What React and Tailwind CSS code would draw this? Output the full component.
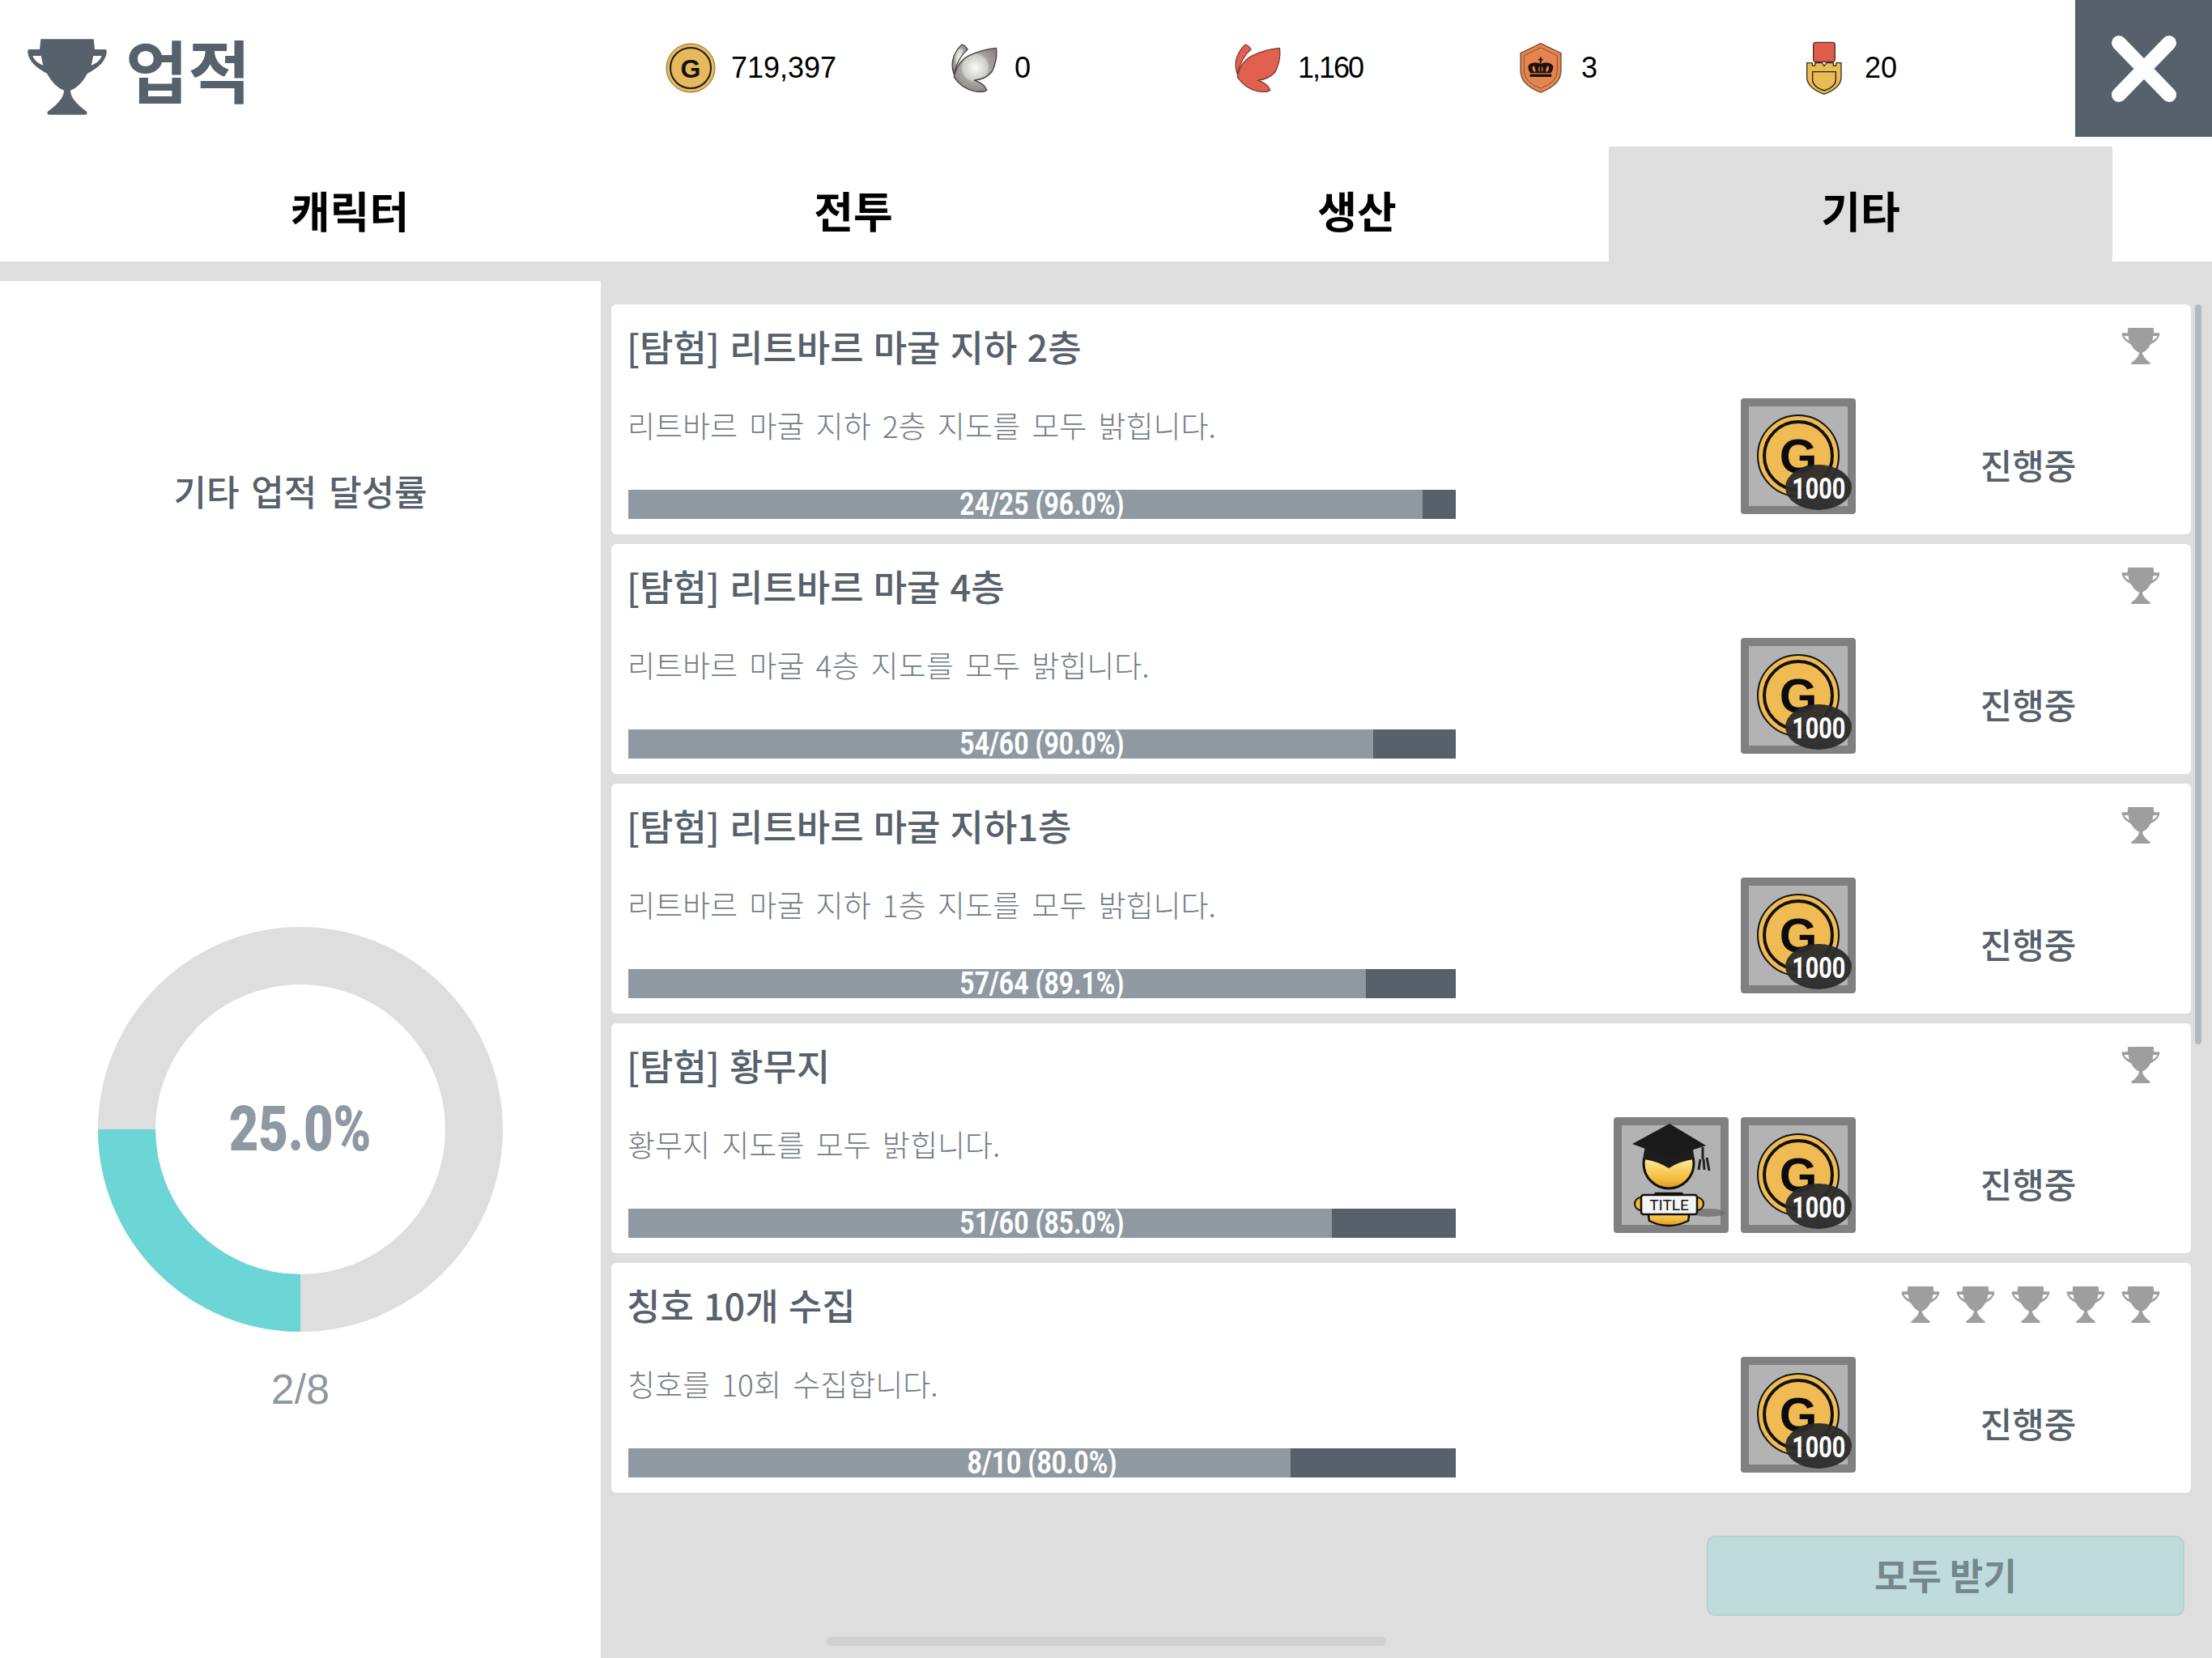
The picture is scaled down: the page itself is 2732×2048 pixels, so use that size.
const C = "#57616b";

function Trophy({ className, fill = "#9e9e9e" }) {
  return (
    <svg viewBox="100 142 300 286" className={className}>
      <path
        fillRule="evenodd"
        fill={fill}
        d="M152 145 H348 L352 183 H390 Q398 183 396 195 Q390 240 325 272 Q300 320 262 335 Q262 370 322 413 Q328 425 315 425 H185 Q172 425 178 413 Q238 370 238 335 Q200 320 175 272 Q110 240 104 195 Q102 183 110 183 H148 Z M122 207 H153 L161 243 Q128 228 122 207 Z M378 207 H347 L339 243 Q372 228 378 207 Z"
      />
    </svg>
  );
}

function Coin({ className }) {
  return (
    <svg viewBox="0 0 62 62" className={className}>
      <circle cx="31" cy="31" r="30" fill="#e5b95c" stroke="#8a6a2a" strokeWidth="1" />
      <circle cx="31" cy="31" r="25" fill="none" stroke="#1a1a1a" strokeWidth="2" />
      <text x="31" y="42.5" textAnchor="middle" fontFamily="Liberation Sans" fontWeight="700" fontSize="32" fill="#111">G</text>
    </svg>
  );
}

function Wing({ className, silver, id }) {
  return (
    <svg viewBox="1122 66 182 190" className={className}>
      <defs>
        <radialGradient id={id} cx="0.5" cy="0.45" r="0.6">
          <stop offset="0" stopColor="#fbfbf7" />
          <stop offset="0.5" stopColor="#c9cbc4" />
          <stop offset="0.56" stopColor="#a8a4a0" />
          <stop offset="1" stopColor="#8a8285" />
        </radialGradient>
      </defs>
      <g fill={silver ? `url(#${id})` : "#e2604f"} stroke={silver ? "#3f3f3f" : "#7a3a30"} strokeWidth="4" strokeLinejoin="round">
        <path d="M1165 72 Q1175 72 1187 90 Q1150 120 1135 185 Q1122 150 1135 115 Q1148 85 1165 72 Z" />
        <path d="M1296 85 Q1302 130 1280 175 Q1255 205 1212 208 Q1250 220 1260 245 Q1250 255 1215 250 Q1165 240 1135 195 Q1145 140 1190 115 Q1240 90 1296 85 Z" />
      </g>
    </svg>
  );
}

function Shield({ className }) {
  return (
    <svg viewBox="112 66 159 190" className={className}>
      <path d="M191 68 L268 105 V170 Q268 225 191 253 Q115 225 115 170 V105 Z" fill="#e5844f" stroke="#6b4a35" strokeWidth="4" />
      <path d="M191 84 L254 114 V170 Q254 215 191 238 Q128 215 128 170 V114 Z" fill="none" stroke="#8a4f2b" strokeWidth="3" />
      <g fill="#1d120c">
        <rect x="188" y="120" width="6" height="24" />
        <rect x="182" y="127" width="18" height="5" />
        <path d="M152 180 Q132 150 160 142 Q178 138 191 146 Q204 138 222 142 Q250 150 230 180 Z" />
        <rect x="150" y="184" width="82" height="11" rx="2" />
      </g>
      <g fill="#e5844f">
        <path d="M165 175 Q154 160 165 152 Q170 160 172 175 Z" />
        <path d="M184 175 Q180 160 187 154 L187 175 Z" />
        <path d="M198 175 Q202 160 195 154 L195 175 Z" />
        <path d="M217 175 Q228 160 217 152 Q212 160 210 175 Z" />
      </g>
    </svg>
  );
}

function Medal({ className }) {
  return (
    <svg viewBox="1172 62 136 198" className={className}>
      <rect x="1200" y="66" width="80" height="72" rx="10" fill="#e25c4e" stroke="#4a2a25" strokeWidth="4" />
      <path d="M1176 142 H1196 V152 H1206 V142 H1232 L1240 154 L1248 142 H1274 V152 H1284 V142 H1303 V195 Q1303 235 1240 258 Q1176 235 1176 195 Z" fill="#e8bd57" stroke="#3a3020" strokeWidth="4" />
      <path d="M1197 175 H1283 V205 Q1283 230 1240 245 Q1197 230 1197 205 Z" fill="none" stroke="#2a2418" strokeWidth="4" />
    </svg>
  );
}

function Stat({ icon, value, className, textClass = "" }) {
  return (
    <div className={`flex items-center gap-[15px] ${className}`}>
      <div className="flex w-[70px] justify-center">{icon}</div>
      <span className={`font-['Liberation_Sans',sans-serif] text-[36px] leading-none text-black ${textClass}`}>{value}</span>
    </div>
  );
}

function Tab({ label, active }) {
  return (
    <div className={`flex w-[622px] items-center justify-center pt-[14px] ${active ? "bg-[#dedede]" : ""}`}>
      <span className="text-[53px] font-bold leading-none text-black">{label}</span>
    </div>
  );
}

function RewardFrame({ children }) {
  return (
    <div className="relative h-[143px] w-[142px] rounded-[4px] border-x-[10px] border-y-[10px] border-[#808080] bg-[#b3b3b3]">
      {children}
    </div>
  );
}

function GoldReward() {
  return (
    <RewardFrame>
      <svg viewBox="0 0 102 102" className="absolute left-[10px] top-[10px] h-[102px] w-[102px]">
        <circle cx="51" cy="51" r="50" fill="#efbb52" stroke="#111" strokeWidth="2" />
        <circle cx="51" cy="51" r="42" fill="none" stroke="#111" strokeWidth="4" />
        <text x="51" y="72" textAnchor="middle" fontFamily="Liberation Sans" fontWeight="700" fontSize="60" fill="#0c0c0c">G</text>
      </svg>
      <div className="absolute left-[45px] top-[72px] flex h-[56px] w-[82px] items-center justify-center rounded-[50%] bg-[#2b2b2b]/95 pt-[4px]">
        <span className="inline-block scale-x-[.8] font-['Roboto',sans-serif] text-[36px] font-bold leading-none text-white">1000</span>
      </div>
    </RewardFrame>
  );
}

function TitleReward() {
  return (
    <RewardFrame>
      <svg viewBox="0 0 122 122" className="absolute left-0 top-0 h-[122px] w-[122px] overflow-visible">
        <defs>
          <linearGradient id="tg" x1="0" x2="0" y1="0" y2="1">
            <stop offset="0.45" stopColor="#fbe58e" />
            <stop offset="0.8" stopColor="#f5bd3c" />
            <stop offset="1" stopColor="#e0942a" />
          </linearGradient>
        </defs>
        <ellipse cx="107" cy="108" rx="21" ry="5" fill="#6b6b6b" opacity="0.75" />
        <path d="M34 118 Q30 100 42 84 H74 Q86 100 82 118 Q58 130 34 118 Z" fill="url(#tg)" stroke="#111" strokeWidth="2.5" />
        <circle cx="58" cy="47" r="31" fill="url(#tg)" stroke="#111" strokeWidth="3" />
        <path d="M27 38 Q28 12 58 12 Q88 12 89 38 L89 42 Q72 44 58 53 Q44 44 27 42 Z" fill="#1c1c1c" />
        <path d="M59 -2 L104 25 L59 40 L13 23 Z" fill="#1a1a1a" />
        <path d="M100 27 L100 42 M97 42 L95 55 M101 42 L102 55 M105 40 L108 56" stroke="#222" strokeWidth="3" fill="none" />
        <circle cx="24" cy="97" r="8" fill="#f0b93a" stroke="#111" strokeWidth="2" />
        <circle cx="93" cy="97" r="8" fill="#f0b93a" stroke="#111" strokeWidth="2" />
        <rect x="24" y="86" width="69" height="24" rx="3" fill="#f5f5f5" stroke="#111" strokeWidth="2.5" />
        <text x="58.5" y="105" textAnchor="middle" fontFamily="Roboto" fontWeight="400" fontSize="19" fill="#111">TITLE</text>
      </svg>
    </RewardFrame>
  );
}

function Card({ item }) {
  return (
    <div className="flex h-[284px] rounded-[6px] bg-white">
      <div className="ml-[21px] flex w-[1022px] flex-col">
        <div className="-ml-[2px] mt-[23px] h-[58px] whitespace-nowrap text-[45px] font-medium leading-[58px] text-[#57616b] [word-spacing:2px]">{item.title}</div>
        <div className="-ml-[1px] mt-[43px] h-[50px] whitespace-nowrap text-[37px] font-light leading-[50px] text-[#747c84] [word-spacing:6px]">{item.desc}</div>
        <div className="relative mt-[55px] h-[36px] bg-[#57616b]">
          <div className="h-full bg-[#8f99a2]" style={{ width: `${item.pct}%` }} />
          <div className="absolute inset-0 flex items-center justify-center">
            <span className="inline-block scale-x-[.84] whitespace-nowrap font-['Roboto',sans-serif] text-[38px] font-bold leading-none text-white">{item.bar}</span>
          </div>
        </div>
      </div>
      <div className="flex min-w-0 flex-1 flex-col">
        <div className="flex h-[116px] items-start justify-end gap-[20px] pr-[38px] pt-[28px]">
          {Array.from({ length: item.trophies }).map((_, i) => (
            <Trophy key={i} className="h-[47px] w-[48px]" />
          ))}
        </div>
        <div className="flex">
          <div className="flex w-[494px] justify-end gap-[15px]">
            {item.title2 && <TitleReward />}
            <GoldReward />
          </div>
          <div className="flex h-[143px] flex-1 items-center justify-center pl-[12px] pt-[19px] text-[43px] font-medium leading-none text-[#57616b]">진행중</div>
        </div>
      </div>
    </div>
  );
}

const items = [
  { title: "[탐험] 리트바르 마굴 지하 2층", desc: "리트바르 마굴 지하 2층 지도를 모두 밝힙니다.", bar: "24/25 (96.0%)", pct: 96, trophies: 1 },
  { title: "[탐험] 리트바르 마굴 4층", desc: "리트바르 마굴 4층 지도를 모두 밝힙니다.", bar: "54/60 (90.0%)", pct: 90, trophies: 1 },
  { title: "[탐험] 리트바르 마굴 지하1층", desc: "리트바르 마굴 지하 1층 지도를 모두 밝힙니다.", bar: "57/64 (89.1%)", pct: 89.1, trophies: 1 },
  { title: "[탐험] 황무지", desc: "황무지 지도를 모두 밝힙니다.", bar: "51/60 (85.0%)", pct: 85, trophies: 1, title2: true },
  { title: "칭호 10개 수집", desc: "칭호를 10회 수집합니다.", bar: "8/10 (80.0%)", pct: 80, trophies: 5 },
];

export default function App() {
  return (
    <div className="relative flex h-[2048px] w-[2732px] flex-col overflow-hidden bg-[#dedede] font-['Noto_Sans_CJK_KR','Noto_Sans',sans-serif]">
      <header className="flex h-[181px] shrink-0 bg-white">
        <div className="h-[169px] w-[818px] shrink-0">
          <div className="flex h-[169px] items-center gap-[22px] pl-[33px]">
            <Trophy className="mt-[20px] h-[96px] w-[100px]" fill={C} />
            <span className="text-[84px] font-bold leading-none text-[#57616b]">업적</span>
          </div>
        </div>
        <div className="flex h-[169px] min-w-0 flex-1 items-center pb-[2px]">
          <Stat className="w-[350px]" icon={<Coin className="h-[62px] w-[62px]" />} value="719,397" />
          <Stat className="w-[350px]" icon={<Wing silver id="ws" className="h-[62px] w-[59px]" />} value="0" />
          <Stat className="w-[350px]" icon={<Wing id="wr" className="h-[62px] w-[59px]" />} value="1,160" textClass="tracking-[-2px]" />
          <Stat className="w-[350px]" icon={<Shield className="h-[62px] w-[52px]" />} value="3" />
          <Stat className="w-[345px]" icon={<Medal className="h-[66px] w-[46px]" />} value="20" />
        </div>
        <div className="flex h-[169px] w-[169px] shrink-0 items-center justify-center bg-[#57616b]">
          <svg viewBox="0 0 82 84" className="h-[84px] w-[82px]">
            <path d="M10 10 L72 74 M72 10 L10 74" stroke="#fff" strokeWidth="18" strokeLinecap="round" />
          </svg>
        </div>
      </header>

      <nav className="flex h-[142px] shrink-0 bg-white pl-[121px]">
        <Tab label="캐릭터" />
        <Tab label="전투" />
        <Tab label="생산" />
        <Tab label="기타" active />
      </nav>

      <div className="mt-[24px] flex min-h-0 flex-1">
        <aside className="flex w-[742px] shrink-0 flex-col items-center bg-white">
          <div className="mt-[229px] h-[60px] text-[44px] font-medium leading-[60px] text-[#57616b] [word-spacing:5px]">기타 업적 달성률</div>
          <div className="relative mt-[509px] h-[500px] w-[500px]">
            <svg viewBox="0 0 500 500" className="h-full w-full">
              <circle cx="250" cy="250" r="214.5" fill="none" stroke="#dedede" strokeWidth="71" />
              <path d="M35.5 250 A214.5 214.5 0 0 0 250 464.5" fill="none" stroke="#6bd6d5" strokeWidth="71" />
            </svg>
            <div className="absolute inset-0 flex items-center justify-center">
              <span className="inline-block scale-x-[.81] font-['Roboto',sans-serif] text-[78px] font-black leading-none text-[#8f99a2]">25.0%</span>
            </div>
          </div>
          <div className="mt-[45px] font-['Liberation_Sans',sans-serif] text-[52px] leading-none text-[#8f99a2]">2/8</div>
        </aside>

        <main className="flex min-w-0 flex-1 flex-col pl-[13px] pr-[26px] pt-[29px]">
          <div className="flex flex-col gap-[12px]">
            {items.map((item) => (
              <Card key={item.title} item={item} />
            ))}
          </div>
          <div className="mr-[8px] mt-[53px] flex h-[99px] w-[590px] items-center justify-center self-end rounded-[10px] border-2 border-[#b6d1d3] bg-[#c0dbdc] pb-[5px] text-[45px] font-bold leading-none text-[#74878a]">
            모두 받기
          </div>
        </main>
      </div>

      <div className="absolute left-[2711px] top-[376px] h-[914px] w-[8px] rounded-[4px] bg-[#b2bac0]" />
      <div className="absolute left-[1021px] top-[2022px] h-[11px] w-[691px] rounded-[5px] bg-[#d0d0d0]" />
    </div>
  );
}
